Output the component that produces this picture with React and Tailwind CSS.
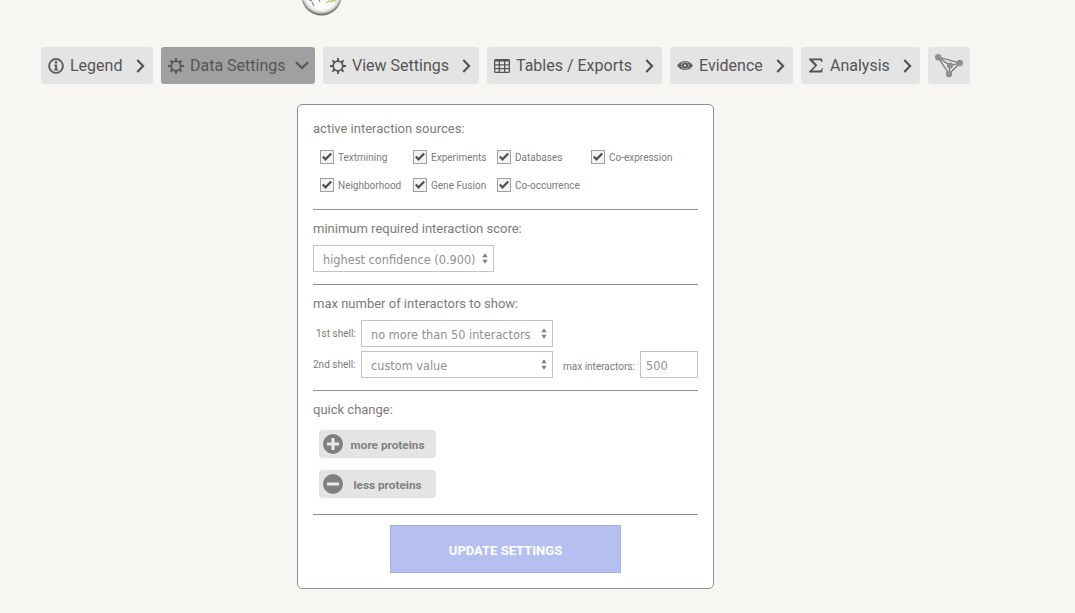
import React from "react";

function InfoIcon() {
  return (
    <svg width="16" height="16" viewBox="0 0 16 16" className="shrink-0 text-[#626262]">
      <circle cx="8" cy="8" r="6.9" fill="none" stroke="currentColor" strokeWidth="2" />
      <circle cx="8" cy="4.4" r="1.3" fill="currentColor" />
      <path d="M6 6.4h3.2v4.7h1v1.4H6v-1.4h1V7.8H6z" fill="currentColor" />
    </svg>
  );
}

function GearIcon() {
  return (
    <svg width="16" height="16" viewBox="0 0 16 16" className="shrink-0">
      <circle cx="8" cy="8" r="4.8" fill="none" stroke="currentColor" strokeWidth="1.8" />
      <path
        d="M8 0v3M8 13v3M0 8h3M13 8h3M2.4 2.4l2.1 2.1M11.5 11.5l2.1 2.1M2.4 13.6l2.1-2.1M11.5 4.5l2.1-2.1"
        fill="none"
        stroke="currentColor"
        strokeWidth="1.8"
      />
    </svg>
  );
}

function TableIcon() {
  return (
    <svg width="16" height="16" viewBox="0 0 16 16" className="shrink-0">
      <path
        d="M1.5 1h13A1.5 1.5 0 0 1 16 2.5v11a1.5 1.5 0 0 1-1.5 1.5h-13A1.5 1.5 0 0 1 0 13.5v-11A1.5 1.5 0 0 1 1.5 1zM1.3 3.6v2.6h3.4V3.6zM6 3.6v2.6h4V3.6zM11.3 3.6v2.6h3.4V3.6zM1.3 7.5v2.4h3.4V7.5zM6 7.5v2.4h4V7.5zM11.3 7.5v2.4h3.4V7.5zM1.3 11.2v2.5h3.4v-2.5zM6 11.2v2.5h4v-2.5zM11.3 11.2v2.5h3.4v-2.5z"
        fill="currentColor"
        fillRule="evenodd"
      />
    </svg>
  );
}

function EyeIcon() {
  return (
    <svg width="16" height="16" viewBox="0 0 16 16" className="shrink-0 text-[#606060]">
      <path
        d="M0 7.5c2-3 5-4.6 8-4.6s6 1.6 8 4.6c-2 3-5 4.6-8 4.6S2 10.5 0 7.5zM4.3 7.5a3.7 3.7 0 0 0 7.4 0 3.7 3.7 0 0 0-7.4 0z"
        fill="currentColor"
        fillRule="evenodd"
      />
      <circle cx="8" cy="7.5" r="2.2" fill="none" stroke="currentColor" strokeWidth="2.2" />
    </svg>
  );
}

function SigmaIcon() {
  return (
    <svg width="16" height="16" viewBox="0 0 16 16" className="shrink-0">
      <path
        d="M1 .5h13l.5 3.6h-1.1c-.3-1.3-.9-1.8-2.4-1.8H4.8l4.5 4.9-4.9 5.3H11c1.8 0 2.5-.6 3-2.2h1l-1 4.2H1v-1l5.8-5.7L1 1.500z"
        fill="currentColor"
      />
    </svg>
  );
}

function ChevronRight() {
  return (
    <svg width="9" height="14" viewBox="0 0 9 14" className="ml-auto shrink-0">
      <path d="M1.3 1l5.8 6-5.8 6" fill="none" stroke="#505050" strokeWidth="2.1" />
    </svg>
  );
}

function ChevronDown() {
  return (
    <svg width="14" height="9" viewBox="0 0 14 9" className="ml-auto shrink-0">
      <path d="M1 1.3l6 5.8 6-5.8" fill="none" stroke="#555555" strokeWidth="2.1" />
    </svg>
  );
}

function NavButton({ icon, label, className, active }) {
  return (
    <button className={`flex h-[37px] items-center gap-1.5 rounded-[3px] pl-[7px] text-[16px] leading-5 ${className}`}>
      {icon}
      <span className="whitespace-nowrap">{label}</span>
      {active ? <ChevronDown /> : <ChevronRight />}
    </button>
  );
}

function NetworkIcon() {
  return (
    <svg width="28" height="24" viewBox="0 0 28 24">
      <path d="M3 3l22 6-11 11zM3 3l12 8.5 10-2.5M15 11.5L14 20" fill="none" stroke="#707070" strokeWidth="1.2" />
      <g fill="#909090">
        <circle cx="3.2" cy="3.2" r="3.2" />
        <circle cx="24.8" cy="9" r="3.2" />
        <circle cx="14" cy="20" r="3.2" />
        <circle cx="15" cy="11.5" r="3.1" />
      </g>
    </svg>
  );
}

function Check({ label }) {
  return (
    <label className="flex h-[14px] items-center gap-1 whitespace-nowrap text-[10px] leading-[14px] text-[#7b7b7b]">
      <span className="flex size-[14px] shrink-0 items-center justify-center border border-[#a0a0a0] bg-[#f3f3f3]">
        <svg width="12" height="12" viewBox="0 0 12 12">
          <path d="M1.8 5.5l2.7 2.8L10.2 2.5" fill="none" stroke="#505050" strokeWidth="2.2" />
        </svg>
      </span>
      <span className="pt-0.5">{label}</span>
    </label>
  );
}

function Select({ children, className }) {
  return (
    <div
      className={`flex h-[27px] shrink-0 items-center justify-between border border-[#c4c4c4] pr-[5px] pl-[9px] font-['DejaVu_Sans_Condensed','DejaVu_Sans',sans-serif] text-[12.6px] [font-stretch:condensed] text-[#909090] ${className}`}
    >
      <span className="whitespace-nowrap pt-[3px]">{children}</span>
      <svg width="6" height="11" viewBox="0 0 6 11" className="shrink-0">
        <path d="M.3 4.2L3 .3l2.7 3.9zM.3 6.8h5.4L3 10.7z" fill="#808080" />
      </svg>
    </div>
  );
}

function Heading({ children }) {
  return <h2 className="h-4 whitespace-nowrap pt-px text-[13px] leading-4 text-[#7b7b7b]">{children}</h2>;
}

function ChangeButton({ label, minus }) {
  return (
    <button className="flex h-7 w-[117px] items-center rounded-[3px] bg-[#e4e4e4] pl-1">
      <svg width="20" height="20" viewBox="0 0 20 20" className="shrink-0">
        <circle cx="10" cy="10" r="10" fill="#808080" />
        <path d={minus ? "M4 10h12" : "M4 10h12M10 4v12"} stroke="#e9e9e9" strokeWidth="3" />
      </svg>
      <span className="w-[89px] pt-0.5 text-center text-[11.8px] leading-4 font-bold text-[#808080]">{label}</span>
    </button>
  );
}

export default function App() {
  return (
    <div className="h-[613px] w-[1075px] overflow-hidden bg-[#f7f6f2] font-[Roboto,sans-serif]">
      <header className="flex h-[47px] items-start pl-[300px]">
        <svg width="42" height="18" viewBox="0 0 42 18">
          <defs>
            <radialGradient id="orb" cx="50%" cy="45%" r="55%">
              <stop offset="0.7" stopColor="#fdfdfd" />
              <stop offset="0.84" stopColor="#deded9" />
              <stop offset="0.95" stopColor="#777777" />
              <stop offset="1" stopColor="#666666" />
            </radialGradient>
          </defs>
          <circle cx="21.5" cy="-4.5" r="20" fill="url(#orb)" />
          <path d="M9 0l3 1M12 2l2 4M19 0l1 2" stroke="#7189b9" strokeWidth="1.2" fill="none" />
          <path d="M26 3l3-2 4 1M31 0l5 1" stroke="#b6c66c" strokeWidth="1.2" fill="none" />
        </svg>
      </header>

      <nav className="flex h-[37px] gap-2 pl-[41px] text-[#555555]">
        <NavButton className="w-[112px] bg-[#e4e4e4] pr-2" icon={<InfoIcon />} label="Legend" />
        <NavButton className="w-[154px] bg-[#a0a0a0] pr-1.5" icon={<GearIcon />} label="Data Settings" active />
        <NavButton className="w-[156px] bg-[#e4e4e4] pr-2" icon={<GearIcon />} label="View Settings" />
        <NavButton className="w-[175px] bg-[#e4e4e4] pr-2" icon={<TableIcon />} label="Tables / Exports" />
        <NavButton className="w-[123px] bg-[#e4e4e4] pr-2" icon={<EyeIcon />} label="Evidence" />
        <NavButton className="w-[119px] bg-[#e4e4e4] pr-2" icon={<SigmaIcon />} label="Analysis" />
        <button className="flex h-[37px] w-[42px] items-center justify-center rounded-[3px] bg-[#e4e4e4]">
          <NetworkIcon />
        </button>
      </nav>

      <main className="mt-5 ml-[297px] h-[485px] w-[417px] rounded-[5px] border border-[#909090] bg-white px-[15px]">
        <section className="h-[105px] border-b border-[#909090] pt-[15px]">
          <Heading>active interaction sources:</Heading>
          <div className="mt-3.5 ml-[7px] grid grid-cols-[93px_84px_94px_90px] gap-y-3.5">
            <Check label="Textmining" />
            <Check label="Experiments" />
            <Check label="Databases" />
            <Check label="Co-expression" />
            <Check label="Neighborhood" />
            <Check label="Gene Fusion" />
            <Check label="Co-occurrence" />
          </div>
        </section>

        <section className="h-[75px] border-b border-[#909090] pt-[10px]">
          <Heading>minimum required interaction score:</Heading>
          <Select className="mt-[9px] w-[181px]">highest confidence (0.900)</Select>
        </section>

        <section className="h-[106px] border-b border-[#909090] pt-[10px]">
          <Heading>max number of interactors to show:</Heading>
          <div className="mt-[9px] flex h-[27px] items-center">
            <span className="w-12 shrink-0 pl-[3px] text-[10px] leading-[14px] whitespace-nowrap text-[#7b7b7b]">1st shell:</span>
            <Select className="w-[192px]">no more than 50 interactors</Select>
          </div>
          <div className="mt-1 flex h-[27px] items-center">
            <span className="w-12 shrink-0 text-[10px] leading-[14px] whitespace-nowrap text-[#7b7b7b]">2nd shell:</span>
            <Select className="w-[192px]">custom value</Select>
            <span className="w-[87px] shrink-0 pt-1 pl-2.5 text-[10px] leading-[14px] whitespace-nowrap text-[#7b7b7b]">
              max interactors:
            </span>
            <div className="flex h-[27px] w-[58px] shrink-0 items-center border border-[#c4c4c4] pl-[5px] font-['DejaVu_Sans_Condensed','DejaVu_Sans',sans-serif] text-[12.6px] [font-stretch:condensed] text-[#909090]">
              <span className="pt-[3px]">500</span>
            </div>
          </div>
        </section>

        <section className="h-[124px] border-b border-[#909090] pt-[10px]">
          <Heading>quick change:</Heading>
          <div className="mt-[13px] ml-1.5 flex flex-col gap-3">
            <ChangeButton label="more proteins" />
            <ChangeButton label="less proteins" minus />
          </div>
        </section>

        <button className="mt-2.5 ml-[77px] flex h-12 w-[231px] items-center justify-center border border-[#a3afe3] bg-[#b5bff0] pt-1 text-[13px] leading-4 font-bold text-white">
          UPDATE SETTINGS
        </button>
      </main>
    </div>
  );
}
